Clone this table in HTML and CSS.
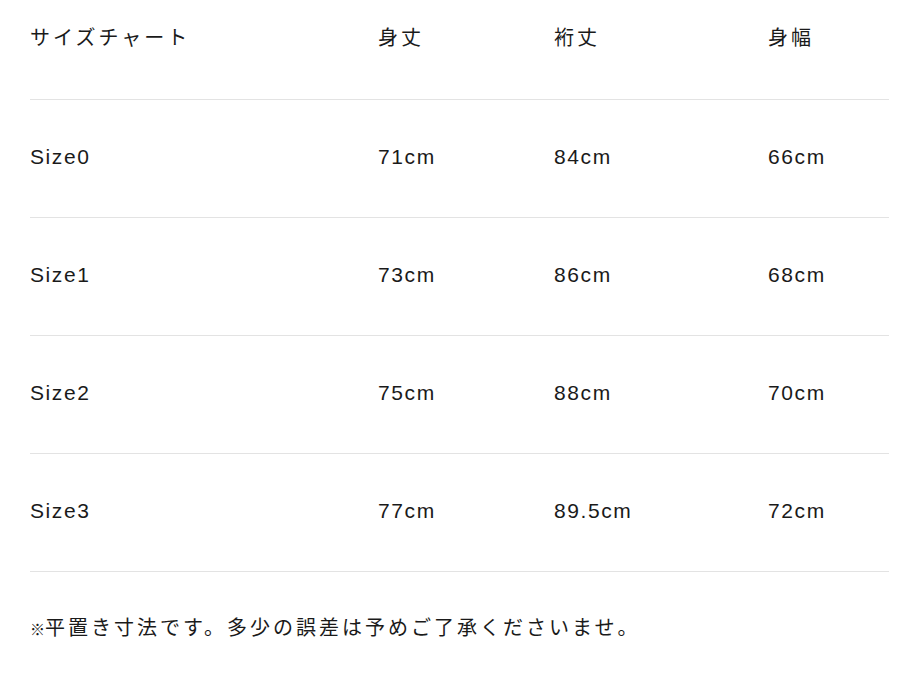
FILE: index.html
```html
<!DOCTYPE html>
<html lang="ja">
<head>
<meta charset="utf-8">
<title>サイズチャート</title>
<link rel="stylesheet" href="styles.css">
</head>
<body>
<div class="page">
  <div class="chart">
    <div class="row head">
      <div class="cell ja">サイズチャート</div>
      <div class="cell ja">身丈</div>
      <div class="cell ja">裄丈</div>
      <div class="cell ja">身幅</div>
    </div>
    <div class="row">
      <div class="cell">Size0</div>
      <div class="cell">71cm</div>
      <div class="cell">84cm</div>
      <div class="cell">66cm</div>
    </div>
    <div class="row">
      <div class="cell">Size1</div>
      <div class="cell">73cm</div>
      <div class="cell">86cm</div>
      <div class="cell">68cm</div>
    </div>
    <div class="row">
      <div class="cell">Size2</div>
      <div class="cell">75cm</div>
      <div class="cell">88cm</div>
      <div class="cell">70cm</div>
    </div>
    <div class="row">
      <div class="cell">Size3</div>
      <div class="cell">77cm</div>
      <div class="cell">89.5cm</div>
      <div class="cell">72cm</div>
    </div>
  </div>
  <p class="note ja"><span class="mark">※</span>平置き寸法です。多少の誤差は予めご了承くださいませ。</p>
</div>
</body>
</html>
```
FILE: styles.css
```css
html, body {
  margin: 0;
  padding: 0;
  background: #ffffff;
}
.page {
  padding: 24px 9px 0 30px;
  font-family: "Liberation Sans", "Noto Sans CJK JP", sans-serif;
  color: #1a1a1a;
  font-size: 21px;
  letter-spacing: 1.6px;
}
.chart {
  display: flex;
  flex-direction: column;
}
.row {
  display: grid;
  grid-template-columns: 348px 176px 214px 1fr;
  border-bottom: 1px solid #e3e3e3;
  padding: 43px 0 46px;
  line-height: 28px;
}
.row.head {
  padding: 0 0 47px;
}
.ja {
  font-size: 20px;
  letter-spacing: 3px;
}
.note {
  margin: 42px 0 0;
  line-height: 28px;
}
.mark {
  font-size: 15px;
  letter-spacing: 0;
}
```
